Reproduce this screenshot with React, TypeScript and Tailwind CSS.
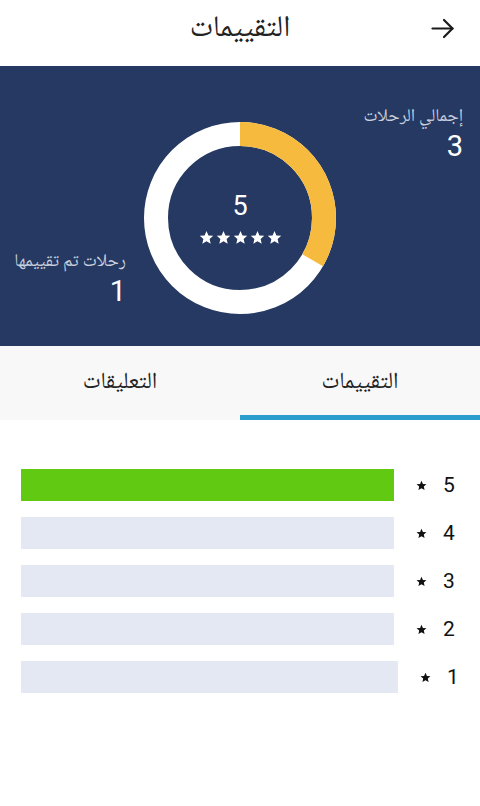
import React from "react";

const arabic = { fontFamily: '"Noto Naskh Arabic", "Noto Sans Arabic", "DejaVu Sans", sans-serif' };
const digits = { fontFamily: 'Roboto, "Noto Sans", sans-serif' };

function Star({ size = 14, color = "#ffffff" }: { size?: number; color?: string }) {
  return (
    <svg width={size} height={size} viewBox="0 0 24 24">
      <polygon
        points="12,1.5 15.1,8.6 22.8,9.3 17,14.4 18.7,22 12,18 5.3,22 7,14.4 1.2,9.3 8.9,8.6"
        fill={color}
      />
    </svg>
  );
}

function Donut() {
  const r = 84;
  const c = 2 * Math.PI * r;
  const frac = 1 / 3;
  return (
    <div className="relative w-[192px] h-[192px]">
      <svg width="192" height="192" viewBox="0 0 192 192" className="block">
        <circle cx="96" cy="96" r={r} fill="none" stroke="#ffffff" strokeWidth="24" />
        <circle
          cx="96"
          cy="96"
          r={r}
          fill="none"
          stroke="#f6bb3e"
          strokeWidth="24"
          strokeDasharray={`${c * frac} ${c}`}
          transform="rotate(-90 96 96)"
        />
      </svg>
      <div className="absolute inset-0 flex flex-col items-center justify-center pt-[2px]">
        <div className="text-white text-[27px] leading-none" style={digits}>5</div>
        <div className="flex gap-[2px] mt-[10px]" dir="ltr">
          <Star size={15} />
          <Star size={15} />
          <Star size={15} />
          <Star size={15} />
          <Star size={15} />
        </div>
      </div>
    </div>
  );
}

function Bar({ n, active }: { n: number; active?: boolean }) {
  return (
    <div className="flex items-center h-[32px] gap-[22px]">
      <div className="flex items-center gap-[16px]" dir="ltr">
        <Star size={11} color="#111111" />
        <span
          className={`text-[21px] text-[#111] leading-none text-center ${n === 1 ? "w-[8px]" : "w-[12px]"}`}
          style={digits}
        >
          {n}
        </span>
      </div>
      <div className={`flex-1 h-[32px] ${active ? "bg-[#62c912]" : "bg-[#e3e8f2]"}`} />
    </div>
  );
}

export default function App() {
  return (
    <div dir="rtl" className="w-[480px] h-[806px] bg-white overflow-hidden">
      {/* Header */}
      <div className="relative h-[66px] flex items-center justify-center bg-white">
        <div className="absolute right-[25px] top-[18px]">
          <svg width="24" height="21" viewBox="0 0 24 21" fill="none" stroke="#1a1a1a" strokeWidth="2.2" strokeLinecap="round" strokeLinejoin="round">
            <path d="M1.5 10.5h20" />
            <path d="M13 2l8.5 8.5L13 19" />
          </svg>
        </div>
        <div className="text-[30px] text-[#222] leading-none -mt-[6px]" style={arabic}>التقييمات</div>
      </div>

      {/* Summary panel */}
      <div className="h-[280px] bg-[#253962] grid grid-cols-[1fr_192px_1fr]">
        <div className="pr-[17px] pt-[40px] text-right">
          <div className="text-[18px] text-[#c9cfdc] leading-[22px]" style={arabic}>إجمالي الرحلات</div>
          <div className="text-[29px] text-white leading-[32px] mt-[2px]" style={digits}>3</div>
        </div>
        <div className="pt-[56px]">
          <Donut />
        </div>
        <div className="pr-[18px] pt-[185px] text-right">
          <div className="text-[18px] text-[#c9cfdc] leading-[22px] whitespace-nowrap" style={arabic}>رحلات تم تقييمها</div>
          <div className="text-[29px] text-white leading-[32px] mt-[2px]" style={digits}>1</div>
        </div>
      </div>

      {/* Tabs */}
      <div className="h-[74px] bg-[#f8f8f8] flex">
        <div className="flex-1 relative flex items-center justify-center">
          <span className="text-[23px] text-[#222] leading-none" style={arabic}>التقييمات</span>
          <div className="absolute bottom-0 left-0 right-0 h-[5px] bg-[#2c9ece]" />
        </div>
        <div className="flex-1 flex items-center justify-center">
          <span className="text-[23px] text-[#222] leading-none" style={arabic}>التعليقات</span>
        </div>
      </div>

      {/* Bars */}
      <div className="pt-[49px] pl-[21px] pr-[25px] flex flex-col gap-[16px]">
        <Bar n={5} active />
        <Bar n={4} />
        <Bar n={3} />
        <Bar n={2} />
        <Bar n={1} />
      </div>
    </div>
  );
}
